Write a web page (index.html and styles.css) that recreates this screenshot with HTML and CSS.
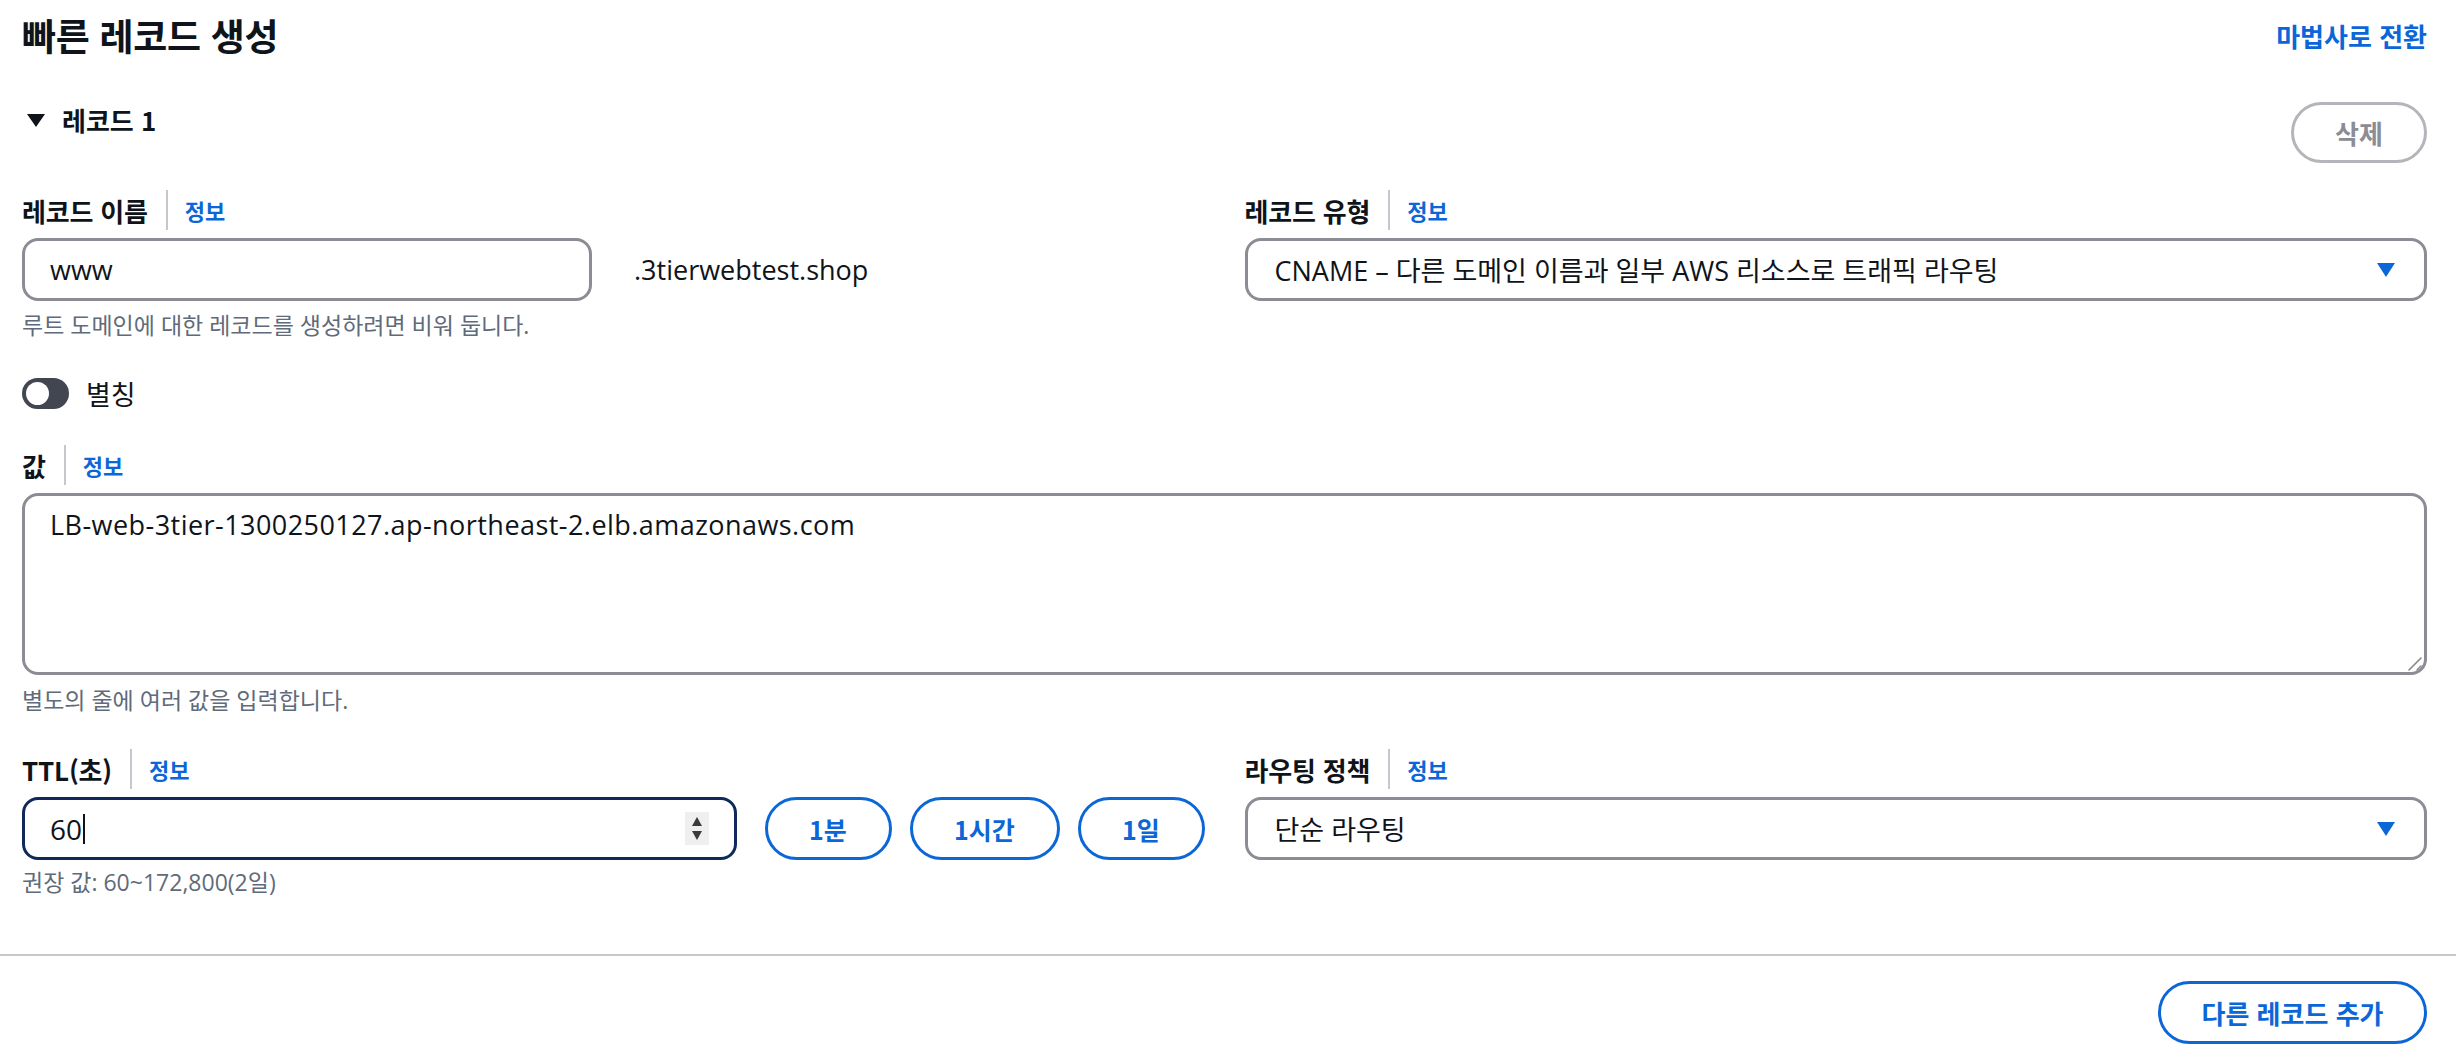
FILE: index.html
```html
<!DOCTYPE html>
<html lang="ko">
<head>
<meta charset="utf-8">
<title>빠른 레코드 생성</title>
<link rel="stylesheet" href="styles.css">
</head>
<body>
<div class="wrap">
  <header class="page-head">
    <h1 class="page-title">빠른 레코드 생성</h1>
    <a class="head-link" href="#">마법사로 전환</a>
  </header>

  <section class="record">
    <div class="record-head">
      <div class="record-title"><span class="tri-down"></span>레코드 1</div>
      <button class="btn btn-disabled" type="button">삭제</button>
    </div>

    <div class="grid grid-first">
      <div class="field">
        <div class="label-row"><span class="label">레코드 이름</span><span class="sep"></span><a class="info" href="#">정보</a></div>
        <div class="name-row">
          <input class="input name-input" type="text" value="www" readonly>
          <span class="suffix">.3tierwebtest.shop</span>
        </div>
        <div class="hint">루트 도메인에 대한 레코드를 생성하려면 비워 둡니다.</div>
      </div>
      <div class="field">
        <div class="label-row"><span class="label">레코드 유형</span><span class="sep"></span><a class="info" href="#">정보</a></div>
        <div class="select">
          <span class="select-text">CNAME – 다른 도메인 이름과 일부 AWS 리소스로 트래픽 라우팅</span>
          <svg class="select-caret" viewBox="0 0 20 16" width="20" height="16" aria-hidden="true"><path d="M1 1h18L10 15z" fill="currentColor"/></svg>
        </div>
      </div>
    </div>

    <div class="toggle-row">
      <span class="toggle"><span class="knob"></span></span>
      <span class="toggle-label">별칭</span>
    </div>

    <div class="field value-field">
      <div class="label-row"><span class="label">값</span><span class="sep"></span><a class="info" href="#">정보</a></div>
      <div class="textarea-wrap">
        <textarea class="textarea" readonly>LB-web-3tier-1300250127.ap-northeast-2.elb.amazonaws.com</textarea>
        <svg class="grip" viewBox="0 0 16 16" width="16" height="16" aria-hidden="true">
          <path d="M2 14L14 2M10 14L14 10" stroke="#86868e" stroke-width="1.6" stroke-linecap="round" fill="none"/>
        </svg>
      </div>
      <div class="hint">별도의 줄에 여러 값을 입력합니다.</div>
    </div>

    <div class="grid grid-ttl">
      <div class="field">
        <div class="label-row"><span class="label">TTL(초)</span><span class="sep"></span><a class="info" href="#">정보</a></div>
        <div class="ttl-row">
          <div class="input ttl-input">
            <span class="ttl-value">60</span><span class="text-caret"></span>
            <span class="spinner"><span class="spin-up"></span><span class="spin-down"></span></span>
          </div>
          <button class="btn btn-normal btn-1m" type="button">1분</button>
          <button class="btn btn-normal btn-1h" type="button">1시간</button>
          <button class="btn btn-normal btn-1d" type="button">1일</button>
        </div>
        <div class="hint">권장 값: 60~172,800(2일)</div>
      </div>
      <div class="field">
        <div class="label-row"><span class="label">라우팅 정책</span><span class="sep"></span><a class="info" href="#">정보</a></div>
        <div class="select">
          <span class="select-text">단순 라우팅</span>
          <svg class="select-caret" viewBox="0 0 20 16" width="20" height="16" aria-hidden="true"><path d="M1 1h18L10 15z" fill="currentColor"/></svg>
        </div>
      </div>
    </div>
  </section>
</div>

<div class="divider"></div>

<div class="wrap footer">
  <button class="btn btn-normal btn-add" type="button">다른 레코드 추가</button>
</div>
</body>
</html>
```

FILE: styles.css
```css
* { box-sizing: border-box; }

html, body {
  margin: 0;
  padding: 0;
  background: #ffffff;
}

body {
  font-family: "Open Sans", "Noto Sans CJK KR", sans-serif;
  color: #0f141a;
  font-size: 27px;
}

.wrap {
  padding: 0 29px 0 22px;
}

/* header */
.page-head {
  display: flex;
  align-items: center;
  justify-content: space-between;
  height: 70px;
}

.page-title {
  margin: 0;
  font-family: "Noto Sans CJK KR", sans-serif;
  font-size: 37px;
  font-weight: 700;
  line-height: 46px;
  letter-spacing: -0.3px;
}

.head-link {
  font-family: "Noto Sans CJK KR", sans-serif;
  font-size: 26px;
  font-weight: 700;
  color: #0b66d8;
  text-decoration: none;
}

/* record header */
.record-head {
  display: flex;
  justify-content: space-between;
  align-items: flex-start;
  margin-top: 32px;
}

.record-title {
  display: flex;
  align-items: center;
  font-family: "Noto Sans CJK KR", sans-serif;
  font-size: 26px;
  font-weight: 700;
  line-height: 36px;
  padding-left: 5px;
}

.tri-down {
  width: 0;
  height: 0;
  border-left: 9px solid transparent;
  border-right: 9px solid transparent;
  border-top: 13px solid #0f141a;
  margin-right: 17px;
}

/* buttons */
.btn {
  font-family: "Noto Sans CJK KR", sans-serif;
  font-size: 25px;
  font-weight: 700;
  height: 63px;
  border-radius: 32px;
  background: #ffffff;
  border: 3px solid #0b66d8;
  color: #0b66d8;
  padding: 0;
  cursor: pointer;
  flex: none;
}

.btn-disabled {
  width: 136px;
  height: 61px;
  border-color: #b4b4bb;
  color: #8c8c94;
  font-size: 26px;
}

.btn-1m, .btn-1d { width: 127px; }
.btn-1h { width: 150px; }
.btn-add { width: 269px; font-size: 26px; }

/* grid */
.grid {
  display: grid;
  grid-template-columns: 1fr 1fr;
  column-gap: 40px;
}

.grid-first { margin-top: 29px; }
.grid-ttl { margin-top: 36px; }

.label-row {
  display: flex;
  align-items: center;
  height: 36px;
  margin-bottom: 10px;
}

.label {
  font-family: "Noto Sans CJK KR", sans-serif;
  font-size: 26px;
  font-weight: 700;
  letter-spacing: -0.2px;
}

.sep {
  width: 2px;
  height: 40px;
  background: #c6c6cd;
  margin: 0 17px 0 18px;
}

.info {
  font-family: "Noto Sans CJK KR", sans-serif;
  font-size: 22px;
  font-weight: 700;
  color: #0b66d8;
  text-decoration: none;
}

.hint {
  margin-top: 9px;
  font-family: "Open Sans", "Noto Sans CJK KR", sans-serif;
  font-size: 23px;
  line-height: 30px;
  color: #5f6b7a;
}

/* inputs */
.input {
  display: block;
  height: 63px;
  border: 3px solid #8c8c94;
  border-radius: 16px;
  background: #ffffff;
  font-family: "Open Sans", "Noto Sans CJK KR", sans-serif;
  font-size: 27px;
  color: #0f141a;
  padding: 0 25px;
  outline: none;
}

.name-row {
  display: flex;
  align-items: center;
}

.name-input {
  width: 570px;
}

.suffix {
  margin-left: 42px;
  font-size: 27px;
}

.select {
  display: flex;
  align-items: center;
  justify-content: space-between;
  height: 63px;
  border: 3px solid #8c8c94;
  border-radius: 16px;
  padding: 0 28px 0 27px;
  font-family: "Open Sans", "Noto Sans CJK KR", sans-serif;
  font-size: 27px;
}

.select-caret {
  color: #0b66d8;
  flex: none;
}

/* toggle */
.toggle-row {
  display: flex;
  align-items: center;
  margin-top: 38px;
  height: 31px;
}

.toggle {
  position: relative;
  width: 47px;
  height: 31px;
  border-radius: 16px;
  background: #424650;
}

.knob {
  position: absolute;
  left: 4px;
  top: 4px;
  width: 23px;
  height: 23px;
  border-radius: 50%;
  background: #ffffff;
}

.toggle-label {
  margin-left: 17px;
  font-family: "Noto Sans CJK KR", sans-serif;
  font-size: 27px;
}

/* value */
.value-field { margin-top: 38px; }

.textarea-wrap {
  position: relative;
}

.textarea {
  display: block;
  width: 100%;
  height: 182px;
  border: 3px solid #8c8c94;
  border-radius: 16px;
  padding: 12px 25px;
  font-family: "Open Sans", "Noto Sans CJK KR", sans-serif;
  font-size: 27px;
  line-height: 34px;
  letter-spacing: 0.45px;
  color: #0f141a;
  resize: none;
  outline: none;
}

.grip {
  position: absolute;
  right: 4px;
  bottom: 3px;
}

.value-field .hint { margin-top: 10px; }

/* ttl */
.ttl-row {
  display: flex;
  align-items: center;
  gap: 18px;
  margin-top: 2px;
}

.ttl-input {
  position: relative;
  flex: 1;
  display: flex;
  align-items: center;
  border-color: #0f2a5a;
}

.ttl-value {
  font-size: 28px;
}

.ttl-row .btn-1m { margin-left: 10px; }

.text-caret {
  width: 2px;
  height: 30px;
  background: #0f141a;
  margin-left: 1px;
}

.spinner {
  position: absolute;
  right: 25px;
  top: 12px;
  width: 24px;
  height: 33px;
  background: #efeff0;
  display: flex;
  flex-direction: column;
  align-items: center;
  justify-content: center;
  gap: 5px;
}

.spin-up {
  width: 0;
  height: 0;
  border-left: 5px solid transparent;
  border-right: 5px solid transparent;
  border-bottom: 9px solid #3a3a3a;
}

.spin-down {
  width: 0;
  height: 0;
  border-left: 5px solid transparent;
  border-right: 5px solid transparent;
  border-top: 9px solid #3a3a3a;
}

.grid-ttl .hint { margin-top: 7px; }

/* divider + footer */
.divider {
  margin-top: 57px;
  height: 2px;
  background: #c6c6cd;
}

.footer {
  display: flex;
  justify-content: flex-end;
  padding-top: 25px;
}
```
